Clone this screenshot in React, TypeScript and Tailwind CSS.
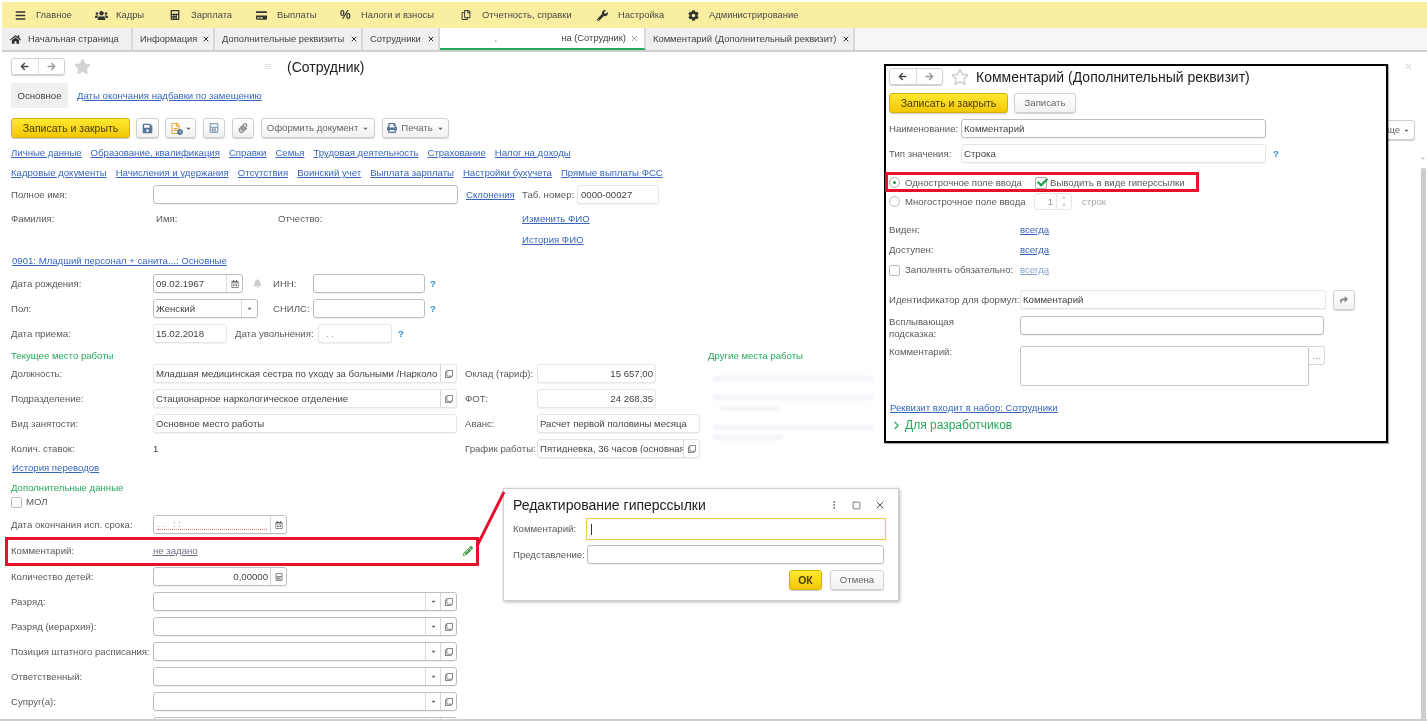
import type { ReactNode } from 'react'
import {
  FaArrowLeft,
  FaArrowRight,
  FaBell,
  FaCalculator,
  FaCog,
  FaCreditCard,
  FaHome,
  FaPaperclip,
  FaPencilAlt,
  FaPrint,
  FaRegCalendarAlt,
  FaRegClone,
  FaRegStar,
  FaSave,
  FaShare,
  FaStar,
  FaUsers,
  FaWrench,
  FaCheck,
  FaCaretDown,
  FaCaretUp,
  FaRegFileAlt,
  FaClock,
  FaBars,
  FaRegCopy
} from 'react-icons/fa'
import { FiChevronRight, FiMoreVertical, FiSquare, FiX } from 'react-icons/fi'

const menu = [
  { label: 'Главное', icon: <FaBars className="h-[11px] w-[11px]" />, w: 'w-[80px]' },
  { label: 'Кадры', icon: <FaUsers className="h-[13px] w-[13px]" />, w: 'w-[75px]' },
  { label: 'Зарплата', icon: <FaCalculator className="h-[10px] w-[10px]" />, w: 'w-[86px]' },
  { label: 'Выплаты', icon: <FaCreditCard className="h-[11px] w-[11px]" />, w: 'w-[84px]' },
  { label: 'Налоги и взносы', icon: <span className="text-[12px] font-bold">%</span>, w: 'w-[121px]' },
  { label: 'Отчетность, справки', icon: <FaRegCopy className="h-[10px] w-[10px]" />, w: 'w-[136px]' },
  { label: 'Настройка', icon: <FaWrench className="h-[11px] w-[11px]" />, w: 'w-[91px]' },
  { label: 'Администрирование', icon: <FaCog className="h-[11px] w-[11px]" />, w: 'w-[125px]' }
]

const tabs = [
  { label: 'Информация', w: 'w-[82px]' },
  { label: 'Дополнительные реквизиты', w: 'w-[148px]' },
  { label: 'Сотрудники', w: 'w-[77px]' }
]

const linksTop = ['Личные данные', 'Образование, квалификация', 'Справки', 'Семья', 'Трудовая деятельность', 'Страхование', 'Налог на доходы']
const linksBottom = ['Кадровые документы', 'Начисления и удержания', 'Отсутствия', 'Воинский учет', 'Выплата зарплаты', 'Настройки бухучета', 'Прямые выплаты ФСС']

function A({ children, className = '' }: { children: ReactNode; className?: string }) {
  return <span className={`whitespace-nowrap text-[#3866bd] underline ${className}`}>{children}</span>
}

function Label({ children, className = 'w-[142px]' }: { children: ReactNode; className?: string }) {
  return <span className={`shrink-0 whitespace-nowrap text-[#5a5a5a] ${className}`}>{children}</span>
}

function Field({
  children,
  className = '',
  edit = false,
  align = 'left'
}: {
  children?: ReactNode
  className?: string
  edit?: boolean
  align?: 'left' | 'right'
}) {
  return (
    <div
      className={`flex h-[19px] shrink-0 items-center overflow-hidden rounded-[3px] border bg-white text-[#444] shadow-[0_1px_1px_rgba(0,0,0,0.06)] ${
        edit ? 'border-[#bdbdbd]' : 'border-[#e6e6e6]'
      } ${align === 'right' ? 'justify-end' : ''} ${className}`}
    >
      {children}
    </div>
  )
}

function Cell({ children, className = 'w-[16px]' }: { children: ReactNode; className?: string }) {
  return (
    <span className={`flex h-full shrink-0 items-center justify-center border-l border-[#d8d8d8] text-[#666] ${className}`}>
      {children}
    </span>
  )
}

function Btn({ children, className = '' }: { children: ReactNode; className?: string }) {
  return (
    <div
      className={`flex h-[20px] shrink-0 items-center justify-center gap-1 rounded-[3px] border border-[#d0d0d0] bg-gradient-to-b from-white to-[#f1f1f1] text-[#666] shadow-[0_1px_1px_rgba(0,0,0,0.18)] ${className}`}
    >
      {children}
    </div>
  )
}

function YellowBtn({ children, className = '' }: { children: ReactNode; className?: string }) {
  return (
    <div
      className={`flex h-[20px] shrink-0 items-center justify-center rounded-[3px] border border-[#d3b400] bg-gradient-to-b from-[#ffe92e] to-[#f2c700] text-[10.5px] text-[#4a4000] shadow-[0_1px_1px_rgba(0,0,0,0.2)] ${className}`}
    >
      {children}
    </div>
  )
}

function NavArrows() {
  return (
    <div className="flex h-[17px] w-[54px] shrink-0 overflow-hidden rounded-[3px] border border-[#d0d0d0] shadow-[0_1px_1px_rgba(0,0,0,0.2)]">
      <span className="flex flex-1 items-center justify-center border-r border-[#ddd] text-[#444]">
        <FaArrowLeft className="h-[9px] w-[9px]" />
      </span>
      <span className="flex flex-1 items-center justify-center text-[#999]">
        <FaArrowRight className="h-[9px] w-[9px]" />
      </span>
    </div>
  )
}

function Help() {
  return <span className="font-bold text-[#2d8fd0]">?</span>
}

const Caret = () => <FaCaretDown className="h-[7px] w-[7px] text-[#666]" />
const Open = () => <FaRegClone className="h-[8px] w-[8px] text-[#666]" />
const TabClose = () => <FiX className="h-[8px] w-[8px] shrink-0 text-[#333]" strokeWidth={3} />

function ListRow({ label }: { label: string }) {
  return (
    <div className="mt-[6px] flex h-[19px] items-center">
      <Label>{label}</Label>
      <Field edit className="w-[304px]">
        <span className="flex-1" />
        <Cell className="w-[15px]">
          <Caret />
        </Cell>
        <Cell>
          <Open />
        </Cell>
      </Field>
    </div>
  )
}

function FaintLines({ className = '' }: { className?: string }) {
  return <div className={`h-[5px] bg-[#f2f4f9] blur-[1px] ${className}`} />
}

function CommentWindow() {
  return (
    <div className="absolute left-[884px] top-[64px] h-[379px] w-[504px] border-[2px] border-black bg-white px-[3px] pt-[2px] text-[#5a5a5a] shadow-[1px_1px_1px_rgba(0,0,0,0.3)]">
      <div className="flex h-[17px] items-center">
        <NavArrows />
        <FaRegStar className="ml-[8px] h-[18px] w-[18px] text-[#cfcfcf]" />
        <span className="ml-[7px] text-[14px] text-[#222]">Комментарий (Дополнительный реквизит)</span>
      </div>
      <div className="mt-[8px] flex gap-[6px]">
        <YellowBtn className="w-[119px]">Записать и закрыть</YellowBtn>
        <Btn className="w-[62px]">Записать</Btn>
      </div>
      <div className="mt-[6px] flex h-[19px] items-center">
        <Label className="w-[72px]">Наименование:</Label>
        <Field edit className="w-[305px] pl-[2px]">
          Комментарий
        </Field>
      </div>
      <div className="mt-[6px] flex h-[19px] items-center">
        <Label className="w-[72px]">Тип значения:</Label>
        <Field className="w-[305px] pl-[2px]">Строка</Field>
        <span className="ml-[7px]">
          <Help />
        </span>
      </div>
      <div className="mt-[10px] flex h-[19px] items-center">
        <span className="flex h-[11px] w-[11px] items-center justify-center rounded-full border border-[#aaa]">
          <span className="h-[3px] w-[3px] rounded-full bg-[#1c9a50]" />
        </span>
        <span className="ml-[5px] w-[130px] whitespace-nowrap">Однострочное поле ввода</span>
        <span className="relative h-[12px] w-[12px] rounded-[2px] border border-[#aaa] bg-white">
          <FaCheck className="absolute left-[1px] top-[-1px] h-[11px] w-[11px] text-[#16a34a]" />
        </span>
        <span className="ml-[3px] whitespace-nowrap">Выводить в виде гиперссылки</span>
      </div>
      <div className="flex h-[19px] items-center">
        <span className="h-[11px] w-[11px] rounded-full border border-[#bbb]" />
        <span className="ml-[5px] w-[129px] whitespace-nowrap">Многострочное поле ввода</span>
        <div className="flex h-[17px] w-[38px] items-center justify-end rounded-[3px] border border-[#e6e6e6] text-[#999]">
          <span className="pr-[3px]">1</span>
          <span className="flex h-full w-[15px] flex-col items-center justify-center border-l border-[#e6e6e6] text-[6px] leading-[7px]">
            <span>˄</span>
            <span>˅</span>
          </span>
        </div>
        <span className="ml-[10px] text-[#aaa]">строк</span>
      </div>
      <div className="mt-[9px] flex h-[20px] items-center">
        <Label className="w-[131px]">Виден:</Label>
        <A>всегда</A>
      </div>
      <div className="flex h-[20px] items-center">
        <Label className="w-[131px]">Доступен:</Label>
        <A>всегда</A>
      </div>
      <div className="flex h-[20px] items-center">
        <span className="h-[11px] w-[11px] shrink-0 rounded-[2px] border border-[#bbb]" />
        <Label className="ml-[5px] w-[115px]">Заполнять обязательно:</Label>
        <A className="opacity-60">всегда</A>
      </div>
      <div className="mt-[10px] flex h-[19px] items-center">
        <Label className="w-[131px]">Идентификатор для формул:</Label>
        <Field className="w-[306px] pl-[2px]">Комментарий</Field>
        <Btn className="ml-[7px] w-[22px]">
          <FaShare className="h-[8px] w-[8px] text-[#888]" />
        </Btn>
      </div>
      <div className="mt-[7px] flex h-[27px]">
        <span className="w-[131px] shrink-0 leading-[12px] text-[#5a5a5a]">
          Всплывающая
          <br />
          подсказка:
        </span>
        <Field edit className="w-[304px]" />
      </div>
      <div className="mt-[3px] flex">
        <Label className="w-[131px] pt-[1px]">Комментарий:</Label>
        <div className="h-[40px] w-[289px] rounded-[3px] border border-[#c4c4c4]" />
        <div className="flex h-[19px] w-[16px] items-center justify-center rounded-r-[3px] border border-l-0 border-[#d8d8d8] text-[#888]">
          ...
        </div>
      </div>
      <A className="mt-[17px] ml-[1px] block">Реквизит входит в набор: Сотрудники</A>
      <div className="mt-[6px] ml-[1px] flex items-center gap-[2px] text-[12px] text-[#27a85f]">
        <FiChevronRight className="h-[13px] w-[13px]" />
        Для разработчиков
      </div>
    </div>
  )
}

function LinkDialog() {
  return (
    <div className="absolute left-[503px] top-[488px] h-[113px] w-[396px] border border-[#d0d0d0] bg-white px-[9px] pt-[7px] text-[#5a5a5a] shadow-[1px_1px_3px_rgba(0,0,0,0.3)]">
      <div className="flex h-[18px] items-center">
        <span className="flex-1 text-[14px] text-[#222]">Редактирование гиперссылки</span>
        <FiMoreVertical className="mr-[13px] h-[10px] w-[10px] text-[#555]" />
        <FiSquare className="mr-[13px] h-[9px] w-[9px] text-[#555]" />
        <FiX className="mr-[3px] h-[12px] w-[12px] text-[#555]" />
      </div>
      <div className="mt-[4px] flex h-[22px] items-center">
        <Label className="w-[73px]">Комментарий:</Label>
        <div className="flex h-[22px] w-[300px] items-center border border-[#f2c94c] pl-[4px]">
          <span className="h-[11px] w-px bg-[#333]" />
        </div>
      </div>
      <div className="mt-[5px] flex h-[19px] items-center">
        <Label className="w-[74px]">Представление:</Label>
        <Field edit className="w-[297px]" />
      </div>
      <div className="mt-[6px] flex justify-end gap-[8px] pr-[5px]">
        <YellowBtn className="w-[33px] font-bold">ОК</YellowBtn>
        <Btn className="w-[54px]">Отмена</Btn>
      </div>
    </div>
  )
}

export default function App() {
  return (
    <div className="relative h-[721px] w-full overflow-hidden bg-white pl-[2px] pt-[2px] font-['Liberation_Sans',Arial,sans-serif] text-[9.6px] leading-none text-[#444] blur-[0.5px]">
      {/* верхнее меню */}
      <div className="flex h-[26px] items-center bg-[#faeea0] pl-[13px] text-[9.4px]">
        {menu.map((m) => (
          <div key={m.label} className={`flex shrink-0 items-center ${m.w}`}>
            <span className="flex w-[21px] shrink-0 text-[#333]">{m.icon}</span>
            <span className="whitespace-nowrap text-[#4a4a4a]">{m.label}</span>
          </div>
        ))}
      </div>

      {/* вкладки */}
      <div className="flex h-[24px] border-b-2 border-[#cfcfcf] bg-[#f6f6f6] text-[9.4px]">
        <div className="flex w-[131px] items-center gap-[7px] border-r-2 border-[#d9d9d9] bg-[#f0f0f0] pl-[8px]">
          <FaHome className="h-[11px] w-[11px] text-[#333]" />
          Начальная страница
        </div>
        {tabs.map((t) => (
          <div key={t.label} className={`flex items-center justify-between border-r-2 border-[#d9d9d9] bg-[#f0f0f0] pl-[7px] pr-[3px] ${t.w}`}>
            <span className="whitespace-nowrap">{t.label}</span>
            <TabClose />
          </div>
        ))}
        <div className="flex w-[206px] items-center justify-end border-b-2 border-r-2 border-b-[#27a85f] border-r-[#d9d9d9] bg-white pr-[5px]">
          <span className="mr-[64px] text-[#888]">,</span>
          <span>на (Сотрудник)</span>
          <FiX className="ml-[4px] h-[9px] w-[9px] text-[#888]" />
        </div>
        <div className="flex w-[209px] items-center justify-between border-r-2 border-[#d9d9d9] bg-[#f0f0f0] pl-[7px] pr-[3px]">
          <span className="whitespace-nowrap">Комментарий (Дополнительный реквизит)</span>
          <TabClose />
        </div>
      </div>

      {/* форма сотрудника */}
      <div className="pl-[9px]">
        <div className="mt-[6px] flex h-[17px] items-center">
          <NavArrows />
          <FaStar className="ml-[9px] h-[17px] w-[17px] text-[#d4d4d4]" />
          <span className="ml-[174px] w-[22px] text-[7px] text-[#bbb] blur-[0.6px]">ⵗⵗⵗ</span>
          <span className="text-[14px] text-[#222]">(Сотрудник)</span>
        </div>
        <div className="mt-[8px] flex h-[25px] items-center">
          <span className="flex h-full w-[57px] items-center justify-center rounded-[2px] bg-[#f0f0f0]">Основное</span>
          <A className="ml-[9px]">Даты окончания надбавки по замещению</A>
        </div>
        <div className="mt-[10px] flex h-[20px] items-center">
          <YellowBtn className="w-[119px]">Записать и закрыть</YellowBtn>
          <Btn className="ml-[6px] w-[23px]">
            <FaSave className="h-[11px] w-[11px] text-[#54749c]" />
          </Btn>
          <Btn className="ml-[6px] w-[31px]">
            <span className="relative">
              <FaRegFileAlt className="h-[11px] w-[11px] text-[#e0a93a]" />
              <FaClock className="absolute -bottom-[1px] -right-[2px] h-[6px] w-[6px] text-[#54749c]" />
            </span>
            <Caret />
          </Btn>
          <Btn className="ml-[7px] w-[22px]">
            <FaCalculator className="h-[10px] w-[10px] text-[#8ea4bf]" />
          </Btn>
          <Btn className="ml-[7px] w-[22px]">
            <FaPaperclip className="h-[10px] w-[10px] text-[#888]" />
          </Btn>
          <Btn className="ml-[7px] w-[114px]">
            Оформить документ <Caret />
          </Btn>
          <Btn className="ml-[7px] w-[67px]">
            <FaPrint className="h-[10px] w-[10px] text-[#54749c]" /> Печать <Caret />
          </Btn>
        </div>
        <div className="mt-[7px] flex h-[16px] items-center gap-[9px]">
          {linksTop.map((l) => (
            <A key={l}>{l}</A>
          ))}
        </div>
        <div className="mt-[4px] flex h-[16px] items-center gap-[9px]">
          {linksBottom.map((l) => (
            <A key={l}>{l}</A>
          ))}
        </div>
        <div className="mt-[4px] flex h-[19px] items-center">
          <Label>Полное имя:</Label>
          <Field edit className="w-[305px]" />
          <A className="ml-[8px] w-[56px]">Склонения</A>
          <Label className="w-[55px]">Таб. номер:</Label>
          <Field className="w-[82px] pl-[3px]">0000-00027</Field>
        </div>
        <div className="mt-[7px] flex h-[16px] items-center">
          <Label className="w-[145px]">Фамилия:</Label>
          <Label className="w-[122px]">Имя:</Label>
          <Label className="w-[244px]">Отчество:</Label>
          <A>Изменить ФИО</A>
        </div>
        <div className="mt-[5px] flex h-[16px] items-center pl-[511px]">
          <A>История ФИО</A>
        </div>
        <div className="mt-[5px] flex h-[16px] items-center pl-[1px]">
          <A>0901: Младший персонал + санита...: Основные</A>
        </div>
        <div className="mt-[5px] flex h-[19px] items-center">
          <Label>Дата рождения:</Label>
          <Field edit className="w-[90px] pl-[2px]">
            <span className="flex-1">09.02.1967</span>
            <Cell>
              <FaRegCalendarAlt className="h-[8px] w-[8px]" />
            </Cell>
          </Field>
          <FaBell className="ml-[10px] h-[9px] w-[9px] text-[#ccc]" />
          <Label className="ml-[11px] w-[40px]">ИНН:</Label>
          <Field edit className="w-[112px]" />
          <span className="ml-[5px]">
            <Help />
          </span>
        </div>
        <div className="mt-[6px] flex h-[19px] items-center">
          <Label>Пол:</Label>
          <Field edit className="w-[105px] pl-[2px]">
            <span className="flex-1">Женский</span>
            <Cell>
              <Caret />
            </Cell>
          </Field>
          <Label className="ml-[15px] w-[40px]">СНИЛС:</Label>
          <Field edit className="w-[112px]" />
          <span className="ml-[5px]">
            <Help />
          </span>
        </div>
        <div className="mt-[6px] flex h-[19px] items-center">
          <Label>Дата приема:</Label>
          <Field className="w-[74px] pl-[2px]">15.02.2018</Field>
          <Label className="ml-[8px] w-[83px]">Дата увольнения:</Label>
          <Field className="w-[74px] pl-[7px] text-[#999]">. .</Field>
          <span className="ml-[6px]">
            <Help />
          </span>
        </div>

        <div className="mt-[5px] flex">
          <div className="w-[697px] shrink-0">
            <div className="flex h-[16px] items-center text-[#27a85f]">Текущее место работы</div>
            <div className="flex h-[19px] items-center">
              <Label>Должность:</Label>
              <Field className="w-[304px] pl-[2px]">
                <span className="flex-1 overflow-hidden whitespace-nowrap">Младшая медицинская сестра по уходу за больными /Нарколо</span>
                <Cell>
                  <Open />
                </Cell>
              </Field>
              <Label className="ml-[8px] w-[72px]">Оклад (тариф):</Label>
              <Field align="right" className="w-[119px] pr-[2px]">
                15 657,00
              </Field>
            </div>
            <div className="mt-[6px] flex h-[19px] items-center">
              <Label>Подразделение:</Label>
              <Field className="w-[304px] pl-[2px]">
                <span className="flex-1 whitespace-nowrap">Стационарное наркологическое отделение</span>
                <Cell>
                  <Open />
                </Cell>
              </Field>
              <Label className="ml-[8px] w-[72px]">ФОТ:</Label>
              <Field align="right" className="w-[119px] pr-[2px]">
                24 268,35
              </Field>
            </div>
            <div className="mt-[6px] flex h-[19px] items-center">
              <Label>Вид занятости:</Label>
              <Field className="w-[304px] pl-[2px]">Основное место работы</Field>
              <Label className="ml-[8px] w-[72px]">Аванс:</Label>
              <Field className="w-[163px] pl-[2px]">Расчет первой половины месяца</Field>
            </div>
            <div className="mt-[6px] flex h-[19px] items-center">
              <Label>Колич. ставок:</Label>
              <span className="w-[312px]">1</span>
              <Label className="w-[72px]">График работы:</Label>
              <Field className="w-[163px] pl-[2px]">
                <span className="flex-1 overflow-hidden whitespace-nowrap">Пятидневка, 36 часов (основная</span>
                <Cell>
                  <Open />
                </Cell>
              </Field>
            </div>
          </div>
          <div className="w-[180px]">
            <div className="flex h-[16px] items-center whitespace-nowrap text-[#27a85f]">Другие места работы</div>
            <FaintLines className="mt-[12px] ml-[5px] w-[160px]" />
            <FaintLines className="mt-[14px] ml-[5px] w-[160px]" />
            <FaintLines className="mt-[6px] ml-[12px] w-[60px]" />
            <FaintLines className="mt-[14px] ml-[5px] w-[160px]" />
            <FaintLines className="mt-[5px] ml-[5px] w-[70px]" />
          </div>
        </div>

        <div className="mt-[2px] flex h-[16px] items-center pl-[1px]">
          <A>История переводов</A>
        </div>
        <div className="mt-[4px] flex h-[16px] items-center text-[#27a85f]">Дополнительные данные</div>
        <div className="flex h-[12px] items-center gap-[4px]">
          <span className="h-[11px] w-[11px] rounded-[2px] border border-[#bbb]" />
          <span className="text-[#5a5a5a]">МОЛ</span>
        </div>
        <div className="mt-[7px] flex h-[19px] items-center">
          <Label>Дата окончания исп. срока:</Label>
          <Field edit className="w-[134px]">
            <span className="ml-[3px] mr-[3px] flex-1 border-b border-dotted border-[#f07a7a] text-[#d08a8a]">. . &nbsp; : :</span>
            <Cell>
              <FaRegCalendarAlt className="h-[8px] w-[8px]" />
            </Cell>
          </Field>
        </div>
        <div className="mt-[7px] flex h-[19px] items-center">
          <Label>Комментарий:</Label>
          <span className="w-[310px] text-[#6d7380]">
            <span className="underline">не задано</span>
          </span>
          <FaPencilAlt className="h-[10px] w-[10px] text-[#3f9a3f]" />
        </div>
        <div className="mt-[7px] flex h-[19px] items-center">
          <Label>Количество детей:</Label>
          <Field edit align="right" className="w-[134px]">
            <span className="pr-[2px]">0,00000</span>
            <Cell>
              <FaCalculator className="h-[8px] w-[8px] text-[#888]" />
            </Cell>
          </Field>
        </div>
        <ListRow label="Разряд:" />
        <ListRow label="Разряд (иерархия):" />
        <ListRow label="Позиция штатного расписания:" />
        <div className="mt-[1px]">
          <ListRow label="Ответственный:" />
        </div>
        <ListRow label="Супруг(а):" />
        <ListRow label="" />
      </div>

      {/* то, что лежит поверх формы */}
      <div className="absolute right-[12px] top-[120px] flex h-[20px] w-[34px] items-center justify-end gap-[3px] rounded-[3px] border border-[#d0d0d0] bg-white pr-[4px] text-[#666] shadow-[0_1px_1px_rgba(0,0,0,0.18)]">
        ще <Caret />
      </div>
      <FiX className="absolute right-[14px] top-[62px] h-[9px] w-[9px] text-[#bbb]" />
      <FaCaretUp className="absolute right-[1px] top-[155px] h-[6px] w-[6px] text-[#bbb]" />
      <div className="absolute right-[1px] top-[168px] h-[553px] w-[5px] rounded-[2px] bg-[#cdcdcd]" />
      <div className="absolute inset-x-0 bottom-0 h-[2px] bg-[#cfcfcf]" />

      <CommentWindow />
      <LinkDialog />

      <div className="absolute left-[5px] top-[537px] h-[29px] w-[474px] border-[3px] border-[#e8112d]" />
      <div className="absolute left-[885px] top-[172px] h-[20px] w-[314px] border-[3px] border-[#e8112d]" />
      <svg className="absolute left-[474px] top-[488px] h-[60px] w-[34px]" viewBox="0 0 34 60">
        <path d="M3 58 L30 4" stroke="#e8112d" strokeWidth="3" fill="none" />
      </svg>
    </div>
  )
}
